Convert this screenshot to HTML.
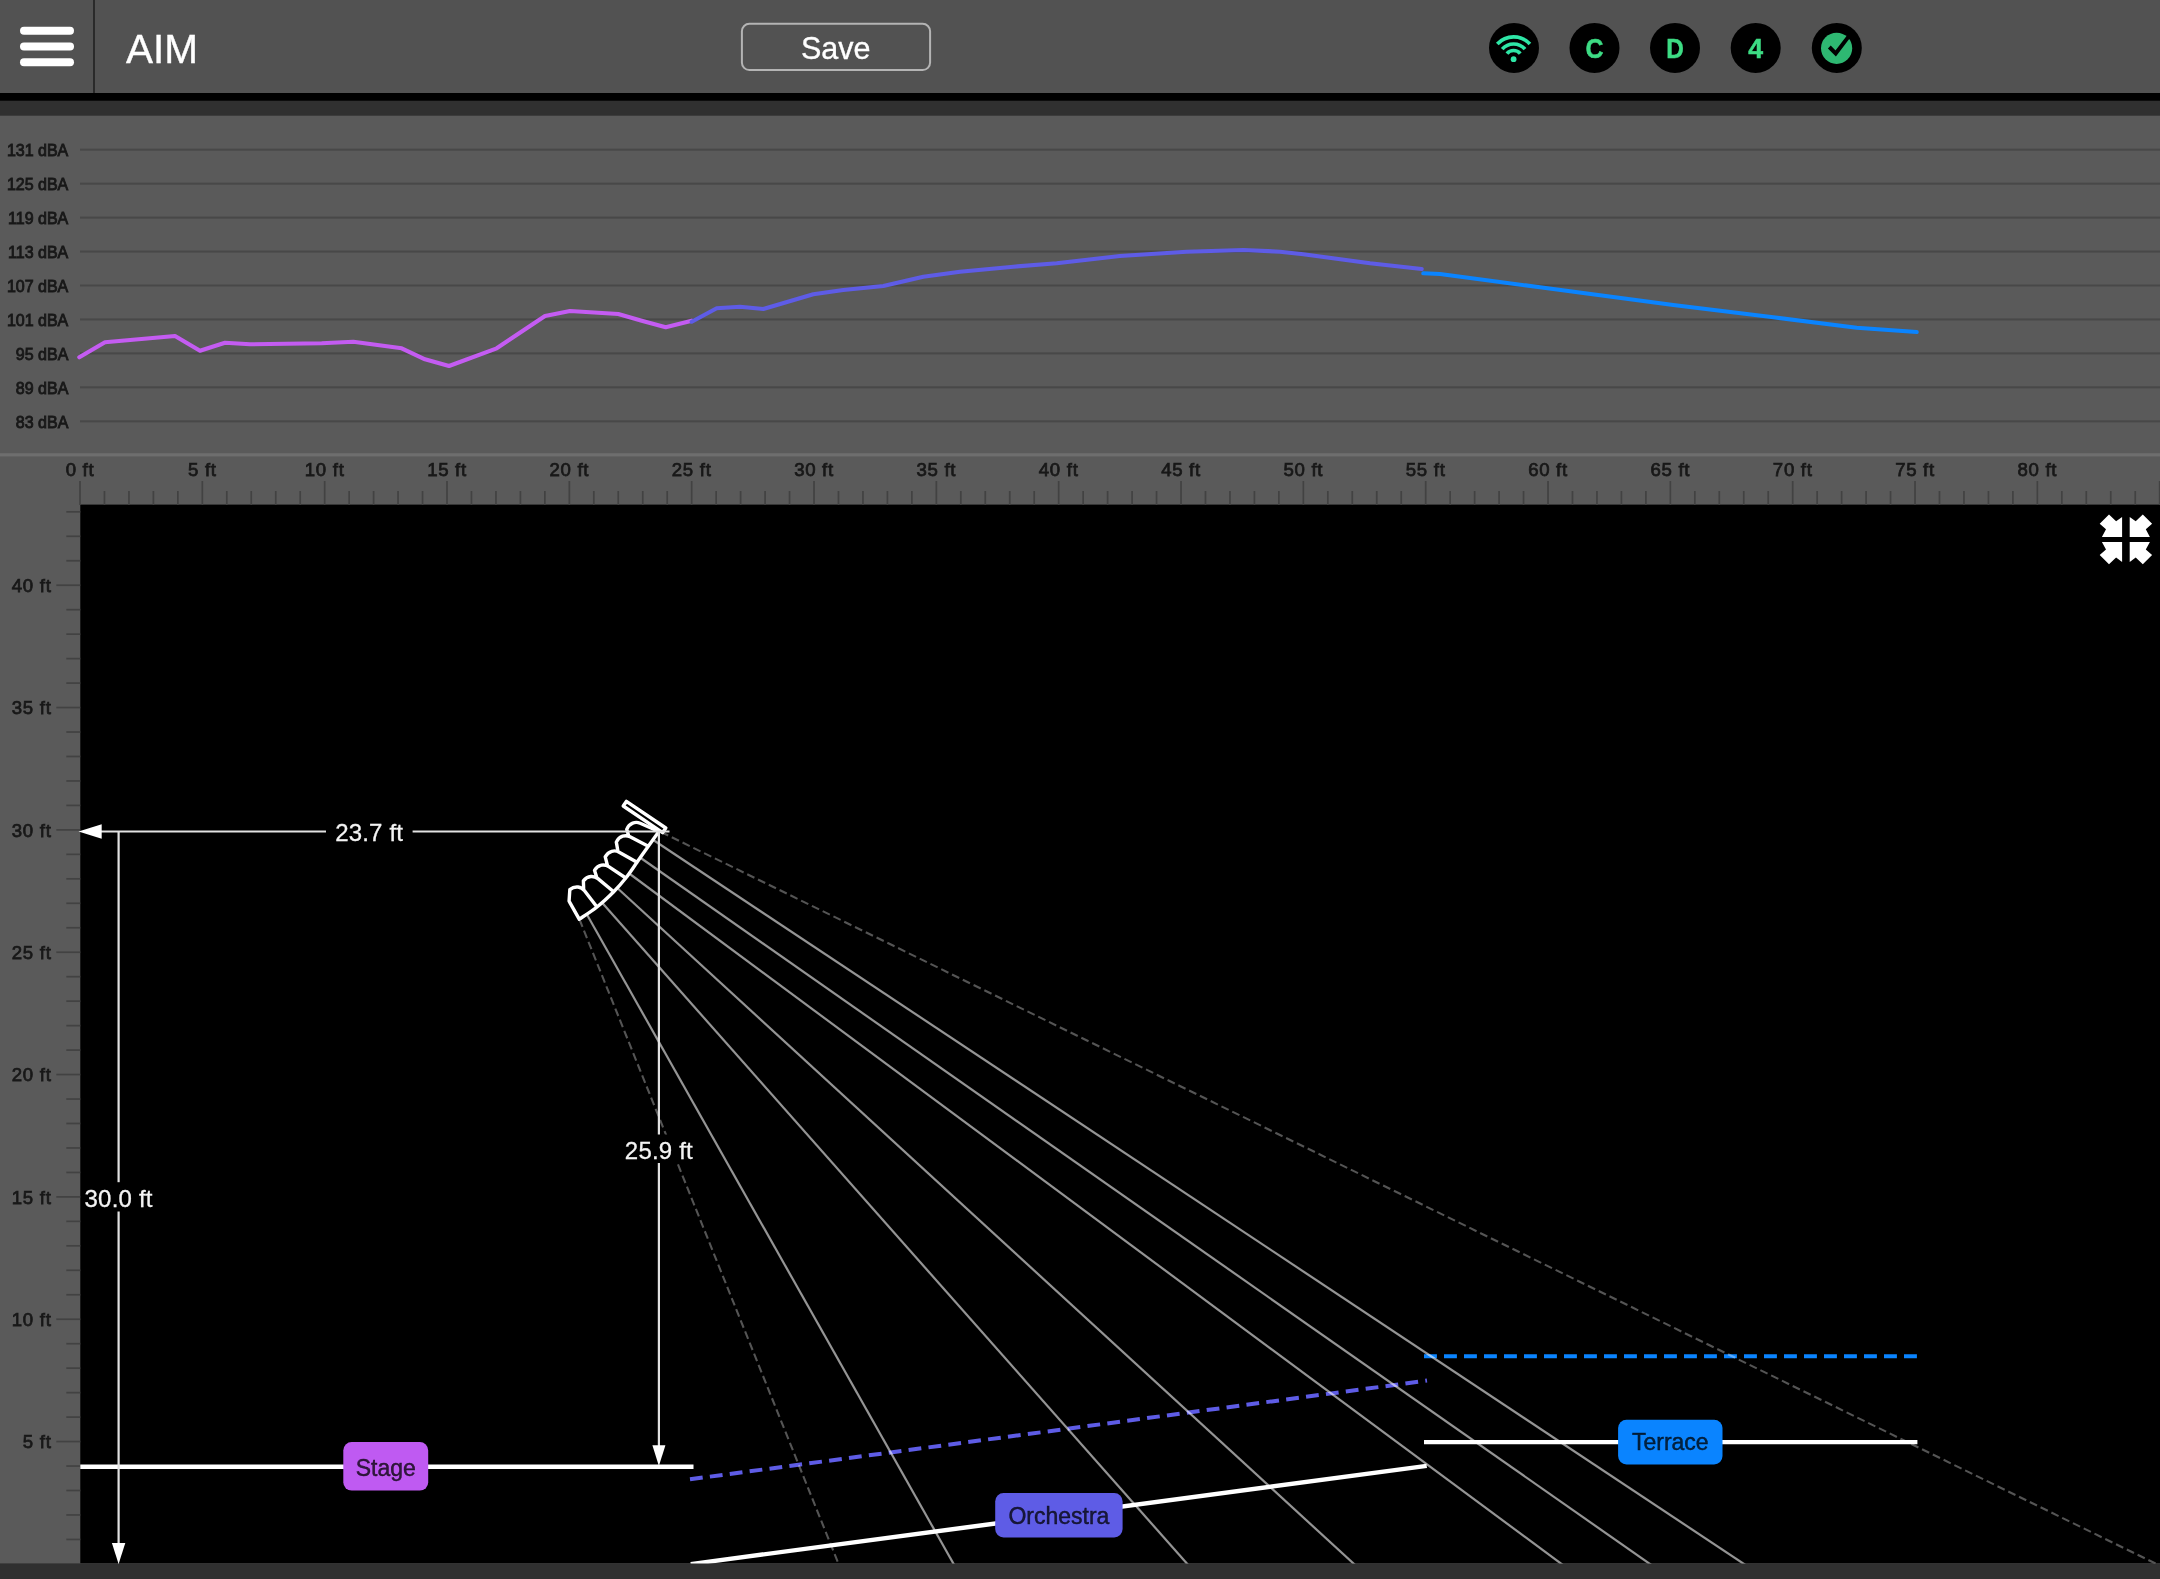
<!DOCTYPE html>
<html><head><meta charset="utf-8"><title>AIM</title>
<style>html,body{margin:0;padding:0;background:#5a5a5a;}body{width:2160px;height:1579px;overflow:hidden;font-family:"Liberation Sans",sans-serif;}svg{display:block;}</style></head>
<body>
<svg width="2160" height="1579" viewBox="0 0 2160 1579" font-family="'Liberation Sans', sans-serif">
<defs><filter id="soft" color-interpolation-filters="sRGB" filterUnits="userSpaceOnUse" x="-20" y="-20" width="2200" height="1619"><feGaussianBlur stdDeviation="0.55"/></filter></defs>
<g filter="url(#soft)">
<rect x="-20" y="-20" width="2200" height="1619" fill="#5a5a5a"/>
<rect x="-20" y="-20" width="2200" height="113.5" fill="#525252"/>
<rect x="-20" y="93" width="2200" height="7.9" fill="#000"/>
<rect x="-20" y="100.9" width="2200" height="14.8" fill="#303030"/>
<rect x="-20" y="453.2" width="2200" height="3.2" fill="#6e6e6e"/>
<rect x="-20" y="502" width="100.3" height="1062" fill="#5a5a5a"/>
<rect x="80.3" y="504.6" width="2099.7" height="1058.8000000000002" fill="#000"/>
<rect x="-20" y="1563.4" width="2200" height="35.59999999999991" fill="#303030"/>
<rect x="20" y="26.8" width="54" height="8" rx="4" fill="#fff"/>
<rect x="20" y="42.5" width="54" height="8" rx="4" fill="#fff"/>
<rect x="20" y="58.2" width="54" height="8" rx="4" fill="#fff"/>
<rect x="93" y="0" width="2" height="93" fill="#2a2a2a"/>
<text x="126" y="63" font-size="40.5" fill="#fff" stroke="#fff" stroke-width="0.35">AIM</text>
<rect x="741.9" y="23.8" width="188.2" height="46.3" rx="7.5" fill="none" stroke="#b4b4b4" stroke-width="2"/>
<text x="835.8" y="58.9" font-size="30.5" fill="#fff" stroke="#fff" stroke-width="0.35" text-anchor="middle">Save</text>
<circle cx="1514" cy="47.9" r="25" fill="#000"/>
<circle cx="1594.5" cy="47.9" r="25" fill="#000"/>
<circle cx="1675" cy="47.9" r="25" fill="#000"/>
<circle cx="1755.7" cy="47.9" r="25" fill="#000"/>
<circle cx="1836.8" cy="47.9" r="25" fill="#000"/>
<circle cx="1513.6" cy="59.2" r="2.9" fill="#2ee6a6"/>
<path d="M1506.94,53.61 A8.7,8.7 0 0 1 1520.26,53.61" fill="none" stroke="#2ee6a6" stroke-width="3.7"/>
<path d="M1502.22,49.13 A15.2,15.2 0 0 1 1524.98,49.13" fill="none" stroke="#2ee6a6" stroke-width="3.7"/>
<path d="M1497.29,43.99 A22.3,22.3 0 0 1 1529.91,43.99" fill="none" stroke="#2ee6a6" stroke-width="3.7"/>
<text transform="translate(1594.5,58.0) scale(0.9,1)" font-size="27.6" font-weight="bold" fill="#3ddc84" stroke="#3ddc84" stroke-width="0.5" text-anchor="middle">C</text>
<text transform="translate(1675,57.9) scale(0.89,1)" font-size="27.4" font-weight="bold" fill="#3ddc84" stroke="#3ddc84" stroke-width="0.5" text-anchor="middle">D</text>
<text transform="translate(1755.7,57.8) scale(0.98,1)" font-size="27.2" font-weight="bold" fill="#3ddc84" stroke="#3ddc84" stroke-width="0.5" text-anchor="middle">4</text>
<circle cx="1836.6" cy="48.3" r="15.6" fill="#2eb872"/>
<path d="M1829.3,47.0 L1835.7,53.4 L1849.5,35.4" fill="none" stroke="#000" stroke-width="4"/>
<rect x="80" y="148.70" width="2100" height="2" fill="#484848"/>
<text x="68.3" y="156.00" font-size="16" fill="#181818" text-anchor="end" stroke="#181818" stroke-width="0.85">131 dBA</text>
<rect x="80" y="182.65" width="2100" height="2" fill="#484848"/>
<text x="68.3" y="189.97" font-size="16" fill="#181818" text-anchor="end" stroke="#181818" stroke-width="0.85">125 dBA</text>
<rect x="80" y="216.60" width="2100" height="2" fill="#484848"/>
<text x="68.3" y="223.94" font-size="16" fill="#181818" text-anchor="end" stroke="#181818" stroke-width="0.85">119 dBA</text>
<rect x="80" y="250.55" width="2100" height="2" fill="#484848"/>
<text x="68.3" y="257.91" font-size="16" fill="#181818" text-anchor="end" stroke="#181818" stroke-width="0.85">113 dBA</text>
<rect x="80" y="284.50" width="2100" height="2" fill="#484848"/>
<text x="68.3" y="291.88" font-size="16" fill="#181818" text-anchor="end" stroke="#181818" stroke-width="0.85">107 dBA</text>
<rect x="80" y="318.45" width="2100" height="2" fill="#484848"/>
<text x="68.3" y="325.85" font-size="16" fill="#181818" text-anchor="end" stroke="#181818" stroke-width="0.85">101 dBA</text>
<rect x="80" y="352.40" width="2100" height="2" fill="#484848"/>
<text x="68.3" y="359.82" font-size="16" fill="#181818" text-anchor="end" stroke="#181818" stroke-width="0.85">95 dBA</text>
<rect x="80" y="386.35" width="2100" height="2" fill="#484848"/>
<text x="68.3" y="393.79" font-size="16" fill="#181818" text-anchor="end" stroke="#181818" stroke-width="0.85">89 dBA</text>
<rect x="80" y="420.30" width="2100" height="2" fill="#484848"/>
<text x="68.3" y="427.76" font-size="16" fill="#181818" text-anchor="end" stroke="#181818" stroke-width="0.85">83 dBA</text>
<polyline points="79.3,357.3 105.0,342.3 175.0,336.0 200.0,350.7 225.0,342.7 250.0,344.3 321.7,343.3 353.3,341.7 401.7,348.3 425.0,359.3 449.0,366.0 496.7,348.3 545.0,316.0 570.0,311.0 618.3,314.0 641.7,320.7 665.7,327.3 691.7,320.7" fill="none" stroke="#c45cf2" stroke-width="4.1" stroke-linejoin="round" stroke-linecap="round"/>
<polyline points="691.7,321.7 716.7,308.3 740.0,306.7 763.3,309.0 813.3,294.3 843.3,290.0 883.3,286.0 923.3,276.7 960.0,271.7 1013.3,266.7 1056.7,263.3 1120.0,256.0 1186.7,251.7 1243.3,250.0 1280.0,251.7 1303.3,254.3 1370.0,263.3 1421.7,269.0" fill="none" stroke="#5e5ce6" stroke-width="4.1" stroke-linejoin="round" stroke-linecap="round"/>
<polyline points="1423.3,273.3 1440.0,274.0 1540.0,287.3 1673.3,305.0 1773.3,317.3 1856.7,327.7 1916.7,332.0" fill="none" stroke="#0a84ff" stroke-width="4.1" stroke-linejoin="round" stroke-linecap="round"/>
<rect x="79.15" y="481" width="1.7" height="24" fill="#424242"/>
<text x="80.00" y="475.8" font-size="18.6" letter-spacing="0.7" fill="#181818" stroke="#181818" stroke-width="0.75" text-anchor="middle">0 ft</text>
<rect x="103.62" y="491" width="1.7" height="14" fill="#424242"/>
<rect x="128.08" y="491" width="1.7" height="14" fill="#424242"/>
<rect x="152.55" y="491" width="1.7" height="14" fill="#424242"/>
<rect x="177.02" y="491" width="1.7" height="14" fill="#424242"/>
<rect x="201.48" y="481" width="1.7" height="24" fill="#424242"/>
<text x="202.33" y="475.8" font-size="18.6" letter-spacing="0.7" fill="#181818" stroke="#181818" stroke-width="0.75" text-anchor="middle">5 ft</text>
<rect x="225.95" y="491" width="1.7" height="14" fill="#424242"/>
<rect x="250.42" y="491" width="1.7" height="14" fill="#424242"/>
<rect x="274.89" y="491" width="1.7" height="14" fill="#424242"/>
<rect x="299.35" y="491" width="1.7" height="14" fill="#424242"/>
<rect x="323.82" y="481" width="1.7" height="24" fill="#424242"/>
<text x="324.67" y="475.8" font-size="18.6" letter-spacing="0.7" fill="#181818" stroke="#181818" stroke-width="0.75" text-anchor="middle">10 ft</text>
<rect x="348.29" y="491" width="1.7" height="14" fill="#424242"/>
<rect x="372.75" y="491" width="1.7" height="14" fill="#424242"/>
<rect x="397.22" y="491" width="1.7" height="14" fill="#424242"/>
<rect x="421.69" y="491" width="1.7" height="14" fill="#424242"/>
<rect x="446.15" y="481" width="1.7" height="24" fill="#424242"/>
<text x="447.00" y="475.8" font-size="18.6" letter-spacing="0.7" fill="#181818" stroke="#181818" stroke-width="0.75" text-anchor="middle">15 ft</text>
<rect x="470.62" y="491" width="1.7" height="14" fill="#424242"/>
<rect x="495.09" y="491" width="1.7" height="14" fill="#424242"/>
<rect x="519.56" y="491" width="1.7" height="14" fill="#424242"/>
<rect x="544.02" y="491" width="1.7" height="14" fill="#424242"/>
<rect x="568.49" y="481" width="1.7" height="24" fill="#424242"/>
<text x="569.34" y="475.8" font-size="18.6" letter-spacing="0.7" fill="#181818" stroke="#181818" stroke-width="0.75" text-anchor="middle">20 ft</text>
<rect x="592.96" y="491" width="1.7" height="14" fill="#424242"/>
<rect x="617.42" y="491" width="1.7" height="14" fill="#424242"/>
<rect x="641.89" y="491" width="1.7" height="14" fill="#424242"/>
<rect x="666.36" y="491" width="1.7" height="14" fill="#424242"/>
<rect x="690.82" y="481" width="1.7" height="24" fill="#424242"/>
<text x="691.67" y="475.8" font-size="18.6" letter-spacing="0.7" fill="#181818" stroke="#181818" stroke-width="0.75" text-anchor="middle">25 ft</text>
<rect x="715.29" y="491" width="1.7" height="14" fill="#424242"/>
<rect x="739.76" y="491" width="1.7" height="14" fill="#424242"/>
<rect x="764.23" y="491" width="1.7" height="14" fill="#424242"/>
<rect x="788.69" y="491" width="1.7" height="14" fill="#424242"/>
<rect x="813.16" y="481" width="1.7" height="24" fill="#424242"/>
<text x="814.01" y="475.8" font-size="18.6" letter-spacing="0.7" fill="#181818" stroke="#181818" stroke-width="0.75" text-anchor="middle">30 ft</text>
<rect x="837.63" y="491" width="1.7" height="14" fill="#424242"/>
<rect x="862.09" y="491" width="1.7" height="14" fill="#424242"/>
<rect x="886.56" y="491" width="1.7" height="14" fill="#424242"/>
<rect x="911.03" y="491" width="1.7" height="14" fill="#424242"/>
<rect x="935.49" y="481" width="1.7" height="24" fill="#424242"/>
<text x="936.34" y="475.8" font-size="18.6" letter-spacing="0.7" fill="#181818" stroke="#181818" stroke-width="0.75" text-anchor="middle">35 ft</text>
<rect x="959.96" y="491" width="1.7" height="14" fill="#424242"/>
<rect x="984.43" y="491" width="1.7" height="14" fill="#424242"/>
<rect x="1008.90" y="491" width="1.7" height="14" fill="#424242"/>
<rect x="1033.36" y="491" width="1.7" height="14" fill="#424242"/>
<rect x="1057.83" y="481" width="1.7" height="24" fill="#424242"/>
<text x="1058.68" y="475.8" font-size="18.6" letter-spacing="0.7" fill="#181818" stroke="#181818" stroke-width="0.75" text-anchor="middle">40 ft</text>
<rect x="1082.30" y="491" width="1.7" height="14" fill="#424242"/>
<rect x="1106.76" y="491" width="1.7" height="14" fill="#424242"/>
<rect x="1131.23" y="491" width="1.7" height="14" fill="#424242"/>
<rect x="1155.70" y="491" width="1.7" height="14" fill="#424242"/>
<rect x="1180.16" y="481" width="1.7" height="24" fill="#424242"/>
<text x="1181.01" y="475.8" font-size="18.6" letter-spacing="0.7" fill="#181818" stroke="#181818" stroke-width="0.75" text-anchor="middle">45 ft</text>
<rect x="1204.63" y="491" width="1.7" height="14" fill="#424242"/>
<rect x="1229.10" y="491" width="1.7" height="14" fill="#424242"/>
<rect x="1253.57" y="491" width="1.7" height="14" fill="#424242"/>
<rect x="1278.03" y="491" width="1.7" height="14" fill="#424242"/>
<rect x="1302.50" y="481" width="1.7" height="24" fill="#424242"/>
<text x="1303.35" y="475.8" font-size="18.6" letter-spacing="0.7" fill="#181818" stroke="#181818" stroke-width="0.75" text-anchor="middle">50 ft</text>
<rect x="1326.97" y="491" width="1.7" height="14" fill="#424242"/>
<rect x="1351.43" y="491" width="1.7" height="14" fill="#424242"/>
<rect x="1375.90" y="491" width="1.7" height="14" fill="#424242"/>
<rect x="1400.37" y="491" width="1.7" height="14" fill="#424242"/>
<rect x="1424.84" y="481" width="1.7" height="24" fill="#424242"/>
<text x="1425.68" y="475.8" font-size="18.6" letter-spacing="0.7" fill="#181818" stroke="#181818" stroke-width="0.75" text-anchor="middle">55 ft</text>
<rect x="1449.30" y="491" width="1.7" height="14" fill="#424242"/>
<rect x="1473.77" y="491" width="1.7" height="14" fill="#424242"/>
<rect x="1498.24" y="491" width="1.7" height="14" fill="#424242"/>
<rect x="1522.70" y="491" width="1.7" height="14" fill="#424242"/>
<rect x="1547.17" y="481" width="1.7" height="24" fill="#424242"/>
<text x="1548.02" y="475.8" font-size="18.6" letter-spacing="0.7" fill="#181818" stroke="#181818" stroke-width="0.75" text-anchor="middle">60 ft</text>
<rect x="1571.64" y="491" width="1.7" height="14" fill="#424242"/>
<rect x="1596.10" y="491" width="1.7" height="14" fill="#424242"/>
<rect x="1620.57" y="491" width="1.7" height="14" fill="#424242"/>
<rect x="1645.04" y="491" width="1.7" height="14" fill="#424242"/>
<rect x="1669.51" y="481" width="1.7" height="24" fill="#424242"/>
<text x="1670.36" y="475.8" font-size="18.6" letter-spacing="0.7" fill="#181818" stroke="#181818" stroke-width="0.75" text-anchor="middle">65 ft</text>
<rect x="1693.97" y="491" width="1.7" height="14" fill="#424242"/>
<rect x="1718.44" y="491" width="1.7" height="14" fill="#424242"/>
<rect x="1742.91" y="491" width="1.7" height="14" fill="#424242"/>
<rect x="1767.37" y="491" width="1.7" height="14" fill="#424242"/>
<rect x="1791.84" y="481" width="1.7" height="24" fill="#424242"/>
<text x="1792.69" y="475.8" font-size="18.6" letter-spacing="0.7" fill="#181818" stroke="#181818" stroke-width="0.75" text-anchor="middle">70 ft</text>
<rect x="1816.31" y="491" width="1.7" height="14" fill="#424242"/>
<rect x="1840.77" y="491" width="1.7" height="14" fill="#424242"/>
<rect x="1865.24" y="491" width="1.7" height="14" fill="#424242"/>
<rect x="1889.71" y="491" width="1.7" height="14" fill="#424242"/>
<rect x="1914.17" y="481" width="1.7" height="24" fill="#424242"/>
<text x="1915.02" y="475.8" font-size="18.6" letter-spacing="0.7" fill="#181818" stroke="#181818" stroke-width="0.75" text-anchor="middle">75 ft</text>
<rect x="1938.64" y="491" width="1.7" height="14" fill="#424242"/>
<rect x="1963.11" y="491" width="1.7" height="14" fill="#424242"/>
<rect x="1987.58" y="491" width="1.7" height="14" fill="#424242"/>
<rect x="2012.04" y="491" width="1.7" height="14" fill="#424242"/>
<rect x="2036.51" y="481" width="1.7" height="24" fill="#424242"/>
<text x="2037.36" y="475.8" font-size="18.6" letter-spacing="0.7" fill="#181818" stroke="#181818" stroke-width="0.75" text-anchor="middle">80 ft</text>
<rect x="2060.98" y="491" width="1.7" height="14" fill="#424242"/>
<rect x="2085.44" y="491" width="1.7" height="14" fill="#424242"/>
<rect x="2109.91" y="491" width="1.7" height="14" fill="#424242"/>
<rect x="2134.38" y="491" width="1.7" height="14" fill="#424242"/>
<rect x="2158.84" y="481" width="1.7" height="24" fill="#424242"/>
<rect x="66.3" y="1538.58" width="14" height="1.7" fill="#424242"/>
<rect x="66.3" y="1514.12" width="14" height="1.7" fill="#424242"/>
<rect x="66.3" y="1489.65" width="14" height="1.7" fill="#424242"/>
<rect x="66.3" y="1465.18" width="14" height="1.7" fill="#424242"/>
<rect x="56.3" y="1440.72" width="24" height="1.7" fill="#424242"/>
<text x="51.5" y="1448.37" font-size="18.6" letter-spacing="0.7" fill="#181818" stroke="#181818" stroke-width="0.75" text-anchor="end">5 ft</text>
<rect x="66.3" y="1416.25" width="14" height="1.7" fill="#424242"/>
<rect x="66.3" y="1391.78" width="14" height="1.7" fill="#424242"/>
<rect x="66.3" y="1367.31" width="14" height="1.7" fill="#424242"/>
<rect x="66.3" y="1342.85" width="14" height="1.7" fill="#424242"/>
<rect x="56.3" y="1318.38" width="24" height="1.7" fill="#424242"/>
<text x="51.5" y="1326.03" font-size="18.6" letter-spacing="0.7" fill="#181818" stroke="#181818" stroke-width="0.75" text-anchor="end">10 ft</text>
<rect x="66.3" y="1293.91" width="14" height="1.7" fill="#424242"/>
<rect x="66.3" y="1269.45" width="14" height="1.7" fill="#424242"/>
<rect x="66.3" y="1244.98" width="14" height="1.7" fill="#424242"/>
<rect x="66.3" y="1220.51" width="14" height="1.7" fill="#424242"/>
<rect x="56.3" y="1196.05" width="24" height="1.7" fill="#424242"/>
<text x="51.5" y="1203.69" font-size="18.6" letter-spacing="0.7" fill="#181818" stroke="#181818" stroke-width="0.75" text-anchor="end">15 ft</text>
<rect x="66.3" y="1171.58" width="14" height="1.7" fill="#424242"/>
<rect x="66.3" y="1147.11" width="14" height="1.7" fill="#424242"/>
<rect x="66.3" y="1122.64" width="14" height="1.7" fill="#424242"/>
<rect x="66.3" y="1098.18" width="14" height="1.7" fill="#424242"/>
<rect x="56.3" y="1073.71" width="24" height="1.7" fill="#424242"/>
<text x="51.5" y="1081.36" font-size="18.6" letter-spacing="0.7" fill="#181818" stroke="#181818" stroke-width="0.75" text-anchor="end">20 ft</text>
<rect x="66.3" y="1049.24" width="14" height="1.7" fill="#424242"/>
<rect x="66.3" y="1024.78" width="14" height="1.7" fill="#424242"/>
<rect x="66.3" y="1000.31" width="14" height="1.7" fill="#424242"/>
<rect x="66.3" y="975.84" width="14" height="1.7" fill="#424242"/>
<rect x="56.3" y="951.38" width="24" height="1.7" fill="#424242"/>
<text x="51.5" y="959.03" font-size="18.6" letter-spacing="0.7" fill="#181818" stroke="#181818" stroke-width="0.75" text-anchor="end">25 ft</text>
<rect x="66.3" y="926.91" width="14" height="1.7" fill="#424242"/>
<rect x="66.3" y="902.44" width="14" height="1.7" fill="#424242"/>
<rect x="66.3" y="877.97" width="14" height="1.7" fill="#424242"/>
<rect x="66.3" y="853.51" width="14" height="1.7" fill="#424242"/>
<rect x="56.3" y="829.04" width="24" height="1.7" fill="#424242"/>
<text x="51.5" y="836.69" font-size="18.6" letter-spacing="0.7" fill="#181818" stroke="#181818" stroke-width="0.75" text-anchor="end">30 ft</text>
<rect x="66.3" y="804.57" width="14" height="1.7" fill="#424242"/>
<rect x="66.3" y="780.11" width="14" height="1.7" fill="#424242"/>
<rect x="66.3" y="755.64" width="14" height="1.7" fill="#424242"/>
<rect x="66.3" y="731.17" width="14" height="1.7" fill="#424242"/>
<rect x="56.3" y="706.71" width="24" height="1.7" fill="#424242"/>
<text x="51.5" y="714.36" font-size="18.6" letter-spacing="0.7" fill="#181818" stroke="#181818" stroke-width="0.75" text-anchor="end">35 ft</text>
<rect x="66.3" y="682.24" width="14" height="1.7" fill="#424242"/>
<rect x="66.3" y="657.77" width="14" height="1.7" fill="#424242"/>
<rect x="66.3" y="633.30" width="14" height="1.7" fill="#424242"/>
<rect x="66.3" y="608.84" width="14" height="1.7" fill="#424242"/>
<rect x="56.3" y="584.37" width="24" height="1.7" fill="#424242"/>
<text x="51.5" y="592.02" font-size="18.6" letter-spacing="0.7" fill="#181818" stroke="#181818" stroke-width="0.75" text-anchor="end">40 ft</text>
<rect x="66.3" y="559.90" width="14" height="1.7" fill="#424242"/>
<rect x="66.3" y="535.44" width="14" height="1.7" fill="#424242"/>
<rect x="66.3" y="510.97" width="14" height="1.7" fill="#424242"/>
<clipPath id="clip"><rect x="80.3" y="504.6" width="2100" height="1058.8"/></clipPath>
<g clip-path="url(#clip)">
<line x1="80" y1="1466.7" x2="693.5" y2="1466.7" stroke="#fff" stroke-width="4.4"/>
<line x1="690.7" y1="1564.1" x2="1426.7" y2="1465.9" stroke="#fff" stroke-width="4.4"/>
<line x1="1424" y1="1442.1" x2="1917.4" y2="1442.1" stroke="#fff" stroke-width="4.4"/>
<line x1="690" y1="1479.3" x2="1427" y2="1380.6" stroke="#5e5ce6" stroke-width="4" stroke-dasharray="12.8 7.25"/>
<line x1="1424" y1="1356.3" x2="1917.4" y2="1356.3" stroke="#0a84ff" stroke-width="4" stroke-dasharray="12.9 7.1"/>
<line x1="587.2" y1="915" x2="963.1" y2="1580.7" stroke="rgba(255,255,255,0.58)" stroke-width="2.2"/>
<line x1="599.7" y1="900" x2="1200.0" y2="1578.3" stroke="rgba(255,255,255,0.58)" stroke-width="2.2"/>
<line x1="614" y1="885" x2="1368.0" y2="1576.8" stroke="rgba(255,255,255,0.58)" stroke-width="2.2"/>
<line x1="624.5" y1="870" x2="1576.7" y2="1575.2" stroke="rgba(255,255,255,0.58)" stroke-width="2.2"/>
<line x1="636.5" y1="855" x2="1665.4" y2="1574.8" stroke="rgba(255,255,255,0.58)" stroke-width="2.2"/>
<line x1="653.3" y1="840" x2="1759.7" y2="1574.4" stroke="rgba(255,255,255,0.58)" stroke-width="2.2"/>
<line x1="661" y1="832" x2="2173.0" y2="1572.1" stroke="rgba(255,255,255,0.33)" stroke-width="2.1" stroke-dasharray="8 4"/>
<line x1="579.5" y1="919.5" x2="845.8" y2="1581.9" stroke="rgba(255,255,255,0.33)" stroke-width="2.1" stroke-dasharray="8 4"/>
<polygon points="658.90,831.50 640.13,823.26 632.65,823.14 626.73,829.39 628.82,836.19 630.07,836.83 622.60,836.25 616.32,842.13 617.96,851.48 619.18,852.17 611.74,851.29 605.22,856.90 607.58,865.85 608.74,866.63 601.40,865.21 594.49,870.34 596.87,877.78 597.95,878.68 590.79,876.49 583.38,880.86 583.67,889.63 584.52,890.74 578.02,887.03 569.83,889.66 569.07,901.15 579.20,919.20 597.00,907.00 613.70,891.80 625.80,878.00 637.00,862.30 648.30,846.20" fill="#000"/>
<polygon points="662.63,832.62 623.25,806.06 626.39,801.42 665.77,827.98" fill="#000" stroke="#fff" stroke-width="3.5" stroke-linejoin="round"/>
<path d="M658.90,831.50 L640.13,823.26 C635.55,821.25 629.27,822.86 626.73,829.39 L628.82,836.19 M648.30,846.20 L630.07,836.83 C625.62,834.54 619.26,835.77 616.32,842.13 L617.96,851.48 M637.00,862.30 L619.18,852.17 C614.83,849.70 608.42,850.66 605.22,856.90 L607.58,865.85 M625.80,878.00 L608.74,866.63 C604.59,863.85 598.12,864.35 594.49,870.34 L596.87,877.78 M613.70,891.80 L597.95,878.68 C594.11,875.48 587.63,875.29 583.38,880.86 L583.67,889.63 M597.00,907.00 L584.52,890.74 C581.48,886.77 575.20,885.16 569.83,889.66 L569.07,901.15 M579.20,919.20 L569.07,901.15 M658.90,831.50 C657.13,833.95 651.95,841.07 648.30,846.20 C644.65,851.33 640.75,857.00 637.00,862.30 C633.25,867.60 629.68,873.08 625.80,878.00 C621.92,882.92 618.50,886.97 613.70,891.80 C608.90,896.63 602.75,902.43 597.00,907.00 C591.25,911.57 582.17,917.17 579.20,919.20" fill="none" stroke="#fff" stroke-width="3.4" stroke-linejoin="round" stroke-linecap="round"/>
<line x1="98" y1="831.5" x2="669.5" y2="831.5" stroke="#e2e2e2" stroke-width="2.2"/>
<line x1="118.6" y1="831.5" x2="118.6" y2="1546" stroke="#e2e2e2" stroke-width="2.2"/>
<line x1="658.9" y1="831.5" x2="658.9" y2="1448" stroke="#e2e2e2" stroke-width="2.2"/>
<rect x="326" y="818" width="86.60000000000002" height="28" fill="#000"/>
<text x="369.2" y="841" font-size="24" letter-spacing="0.2" fill="#f4f4f4" stroke="#f4f4f4" stroke-width="0.3" text-anchor="middle">23.7 ft</text>
<rect x="82" y="1182.2" width="74" height="29.299999999999955" fill="#000"/>
<text x="118.6" y="1206.7" font-size="24" letter-spacing="0.2" fill="#f4f4f4" stroke="#f4f4f4" stroke-width="0.3" text-anchor="middle">30.0 ft</text>
<rect x="621" y="1134.5" width="76" height="28.5" fill="#000"/>
<text x="658.9" y="1158.5" font-size="24" letter-spacing="0.2" fill="#f4f4f4" stroke="#f4f4f4" stroke-width="0.3" text-anchor="middle">25.9 ft</text>
</g>
<polygon points="78.5,831.5 101.7,824.3 101.7,838.7" fill="#fff"/>
<polygon points="118.6,1564 111.9,1543 125.3,1543" fill="#fff"/>
<polygon points="658.9,1466 652.4,1445.2 665.4,1445.2" fill="#fff"/>
<rect x="343.3" y="1442.0" width="84.9" height="48.6" rx="8.4" fill="#bf5af2"/>
<text x="385.8" y="1475.6" font-size="23" fill="#000" fill-opacity="0.74" stroke="#000" stroke-opacity="0.74" stroke-width="0.45" text-anchor="middle">Stage</text>
<rect x="995.2" y="1493.0" width="127.4" height="44.4" rx="8.4" fill="#5e5ce6"/>
<text x="1058.9" y="1524.1" font-size="23" fill="#000" fill-opacity="0.74" stroke="#000" stroke-opacity="0.74" stroke-width="0.45" text-anchor="middle">Orchestra</text>
<rect x="1618.1" y="1419.7" width="104.4" height="44.7" rx="8.4" fill="#0a84ff"/>
<text x="1670.3" y="1449.9" font-size="23" fill="#000" fill-opacity="0.74" stroke="#000" stroke-opacity="0.74" stroke-width="0.45" text-anchor="middle">Terrace</text>
<path d="M0,0 L0,-20 L-6,-15.6 L-13.1,-22.4 L-22.4,-13.1 L-16.1,-7.6 L-20.2,0 Z" transform="translate(2122.1,536.9) scale(1,1)" fill="#fff"/>
<path d="M0,0 L0,-20 L-6,-15.6 L-13.1,-22.4 L-22.4,-13.1 L-16.1,-7.6 L-20.2,0 Z" transform="translate(2129.7,536.9) scale(-1,1)" fill="#fff"/>
<path d="M0,0 L0,-20 L-6,-15.6 L-13.1,-22.4 L-22.4,-13.1 L-16.1,-7.6 L-20.2,0 Z" transform="translate(2122.1,541.9) scale(1,-1)" fill="#fff"/>
<path d="M0,0 L0,-20 L-6,-15.6 L-13.1,-22.4 L-22.4,-13.1 L-16.1,-7.6 L-20.2,0 Z" transform="translate(2129.7,541.9) scale(-1,-1)" fill="#fff"/>
</g>
</svg>
</body></html>
